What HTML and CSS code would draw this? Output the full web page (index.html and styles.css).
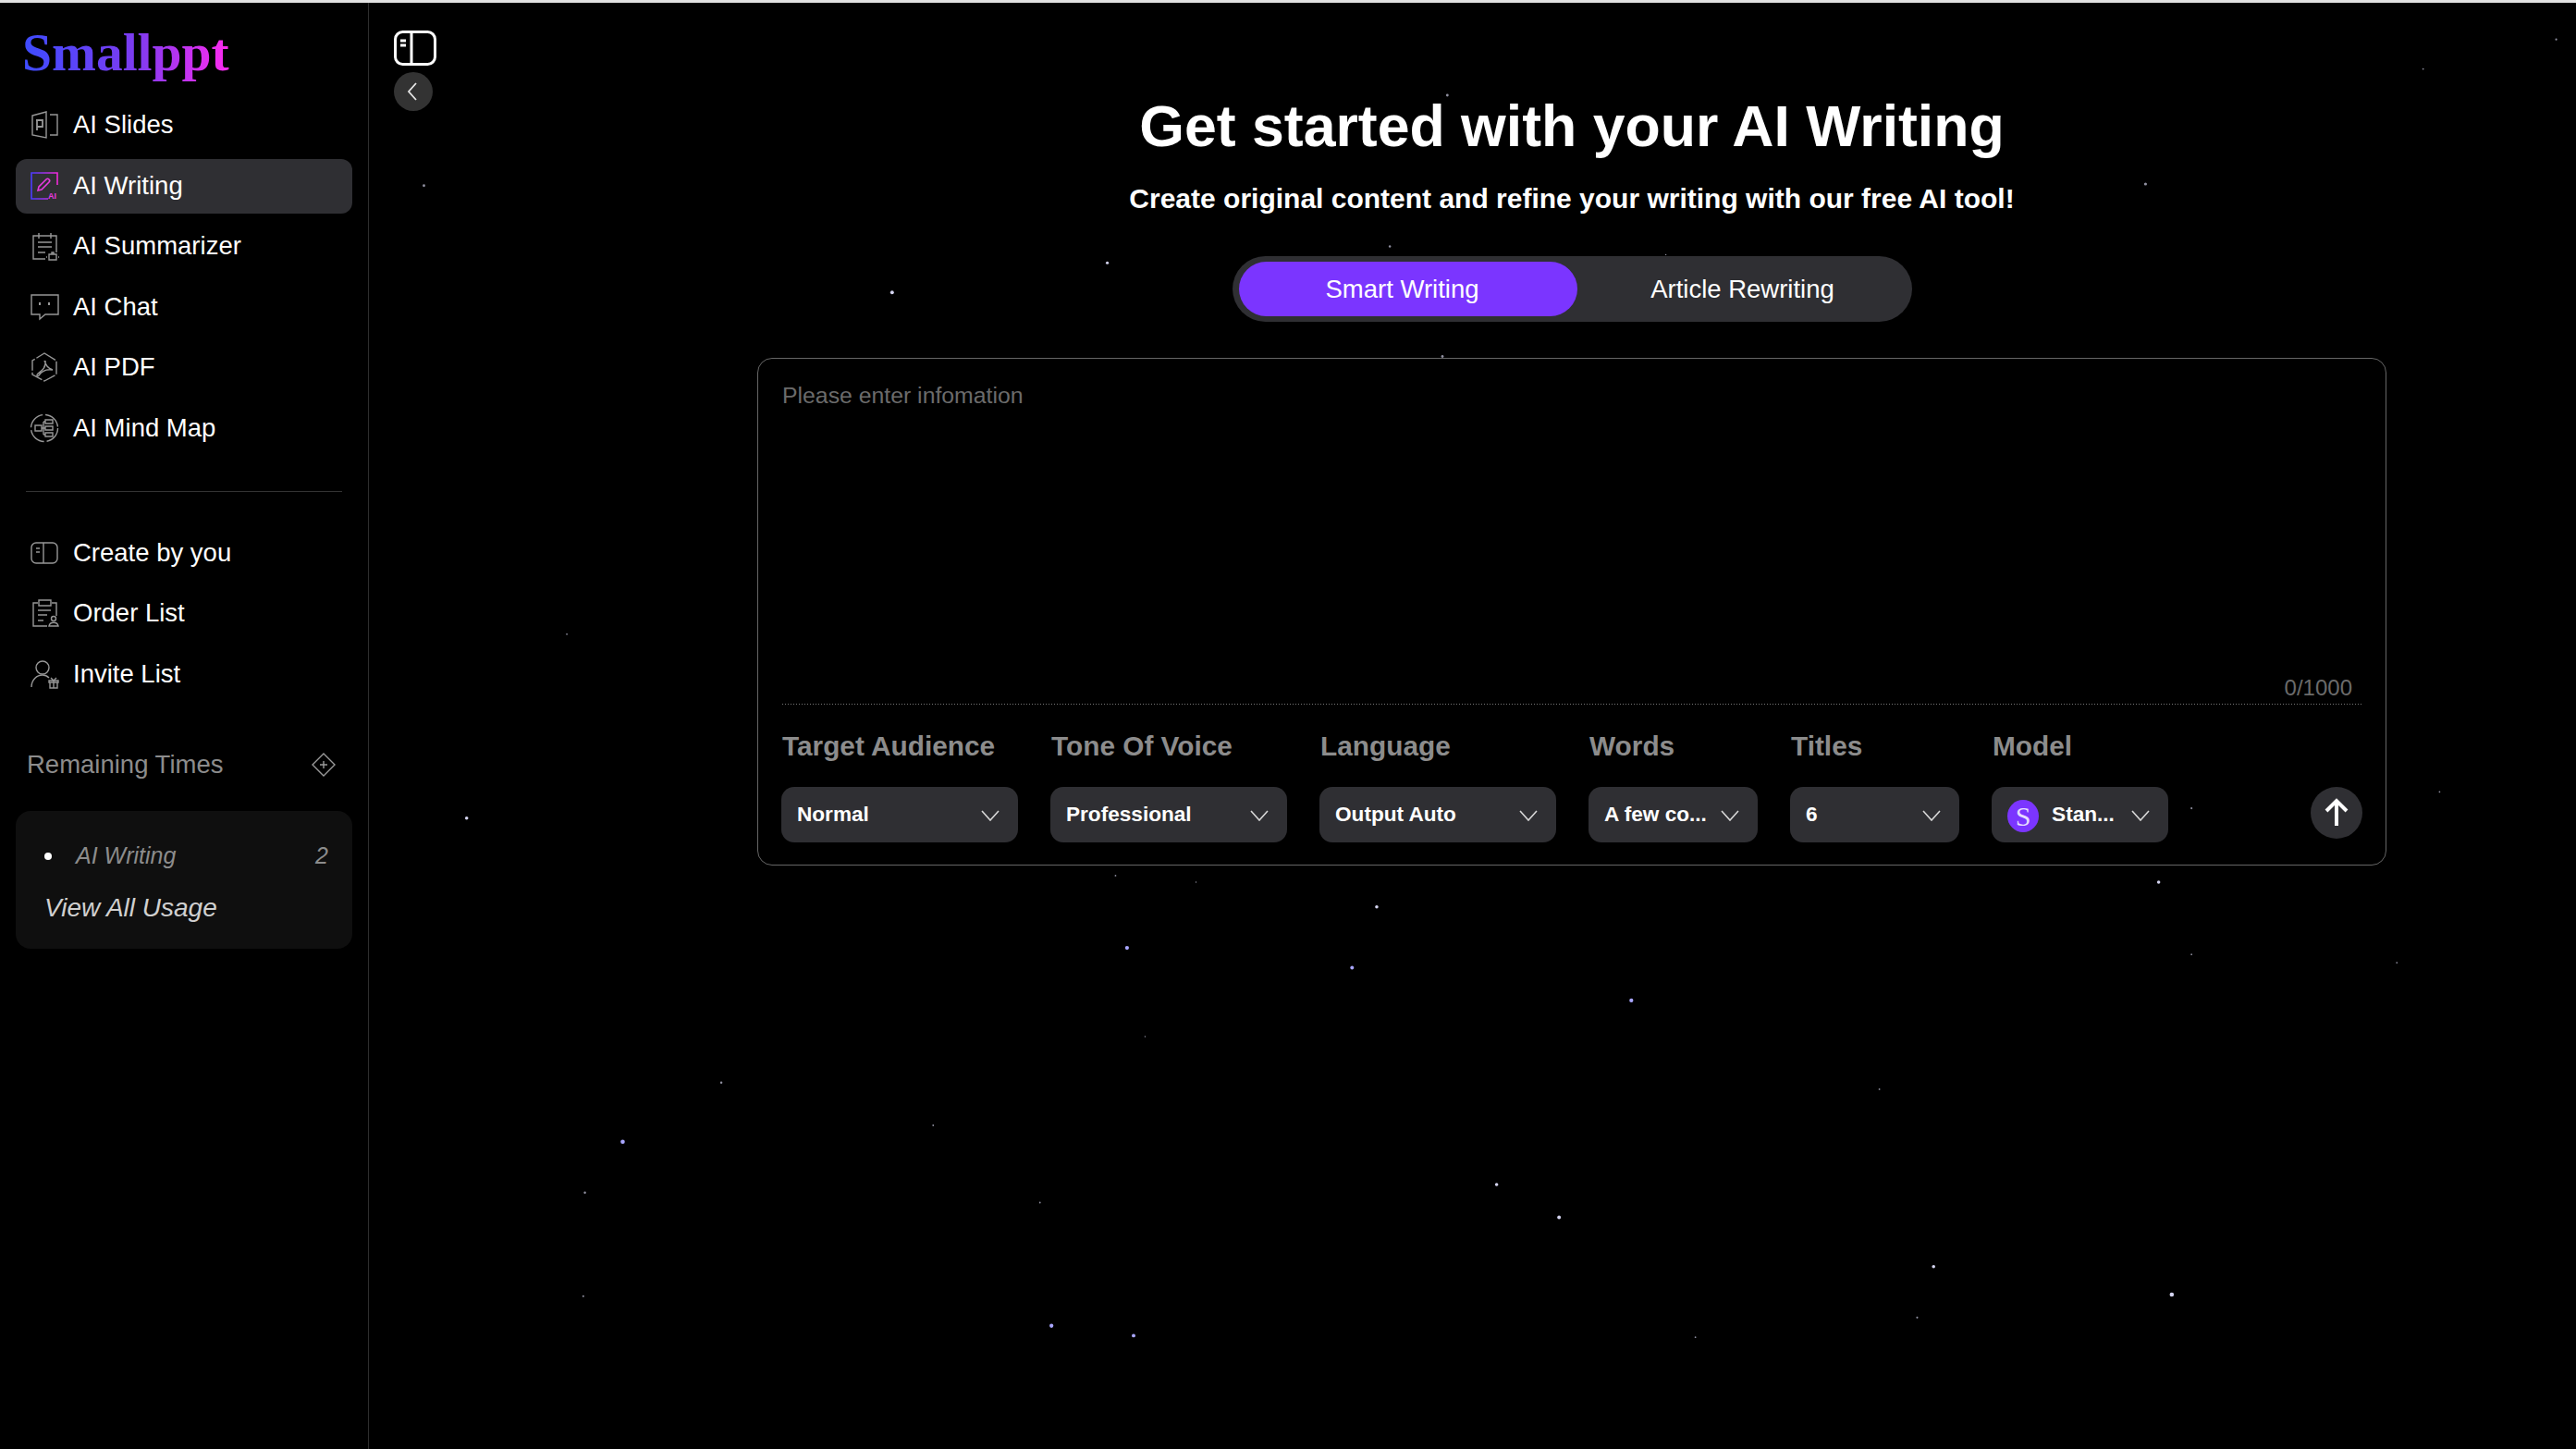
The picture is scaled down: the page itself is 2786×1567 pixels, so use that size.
FILE: index.html
```html
<!DOCTYPE html>
<html lang="en">
<head>
  <meta charset="UTF-8" />
  <meta name="viewport" content="width=device-width, initial-scale=1.0"/>
  <title>Smallppt – AI Writing</title>
  <link rel="stylesheet" href="styles.css">
</head>
<body>
  <!-- star field -->
  <svg class="stars" viewBox="0 0 1568 882" fill="#fff">
    <g fill="#8f8f9f">
      <circle cx="881" cy="58" r=".8"/><circle cx="1475" cy="42" r=".5"/><circle cx="1556" cy="24" r=".6"/>
      <circle cx="258" cy="113" r=".8"/><circle cx="1306" cy="112" r=".9"/><circle cx="846" cy="150" r=".7"/>
      <circle cx="1014" cy="155" r=".4"/><circle cx="878" cy="217" r=".8"/><circle cx="345" cy="386" r=".5"/>
      <circle cx="1485" cy="482" r=".5"/><circle cx="1334" cy="492" r=".6"/><circle cx="679" cy="533" r=".5"/>
      <circle cx="728" cy="537" r=".4"/><circle cx="1334" cy="581" r=".5"/><circle cx="1459" cy="586" r=".5"/>
      <circle cx="697" cy="631" r=".4"/><circle cx="439" cy="659" r=".7"/><circle cx="568" cy="685" r=".5"/>
      <circle cx="1144" cy="663" r=".5"/><circle cx="356" cy="726" r=".7"/><circle cx="633" cy="732" r=".5"/>
      <circle cx="355" cy="789" r=".6"/><circle cx="1167" cy="802" r=".6"/><circle cx="1032" cy="814" r=".5"/>
    </g>
    <g fill="#d4d4f0">
      <circle cx="674" cy="160" r=".9"/><circle cx="543" cy="178" r="1.1"/><circle cx="284" cy="498" r="1"/>
      <circle cx="1314" cy="537" r="1"/><circle cx="838" cy="552" r="1"/><circle cx="911" cy="721" r="1"/>
      <circle cx="949" cy="741" r="1.1"/><circle cx="1177" cy="771" r="1"/><circle cx="1322" cy="788" r="1.3"/>
    </g>
    <g fill="#a9a6ff">
      <circle cx="686" cy="577" r="1.2"/><circle cx="823" cy="589" r="1.1"/><circle cx="993" cy="609" r="1.2"/>
      <circle cx="379" cy="695" r="1.3"/><circle cx="640" cy="807" r="1.2"/><circle cx="690" cy="813" r="1.1"/>
    </g>
  </svg>

  <aside class="sidebar">
    <div class="logo">Smallppt</div>

    <nav class="nav">
      <a class="nav-item">
        <svg class="nav-icon" viewBox="0 0 32 32"><path d="M3 6l15-4v28L3 27zM22 5h8v22h-8"/><path d="M7 11h7v7H8M8 11v11" stroke-width="1.8"/></svg>
        AI Slides
      </a>
      <a class="nav-item active">
        <svg class="nav-icon" viewBox="0 0 32 32">
          <defs><linearGradient id="grad" x1="0" y1="0" x2="1" y2="0"><stop offset="0" stop-color="#4a3cff"/><stop offset="1" stop-color="#f22ad8"/></linearGradient></defs>
          <path d="M20 30H2V2h28v13" stroke="url(#grad)" stroke-width="1.6"/>
          <path d="M9 21l1-4 8-8c2-2 5 1 3 3l-8 8z" stroke="#e83ae0" stroke-width="1.6"/>
          <text x="20" y="30" class="icon-ai">AI</text>
        </svg>
        AI Writing
      </a>
      <a class="nav-item">
        <svg class="nav-icon" viewBox="0 0 32 32"><path d="M17 30H4V5h25v18M10 2v6M23 2v6M9 12h15M9 17h15M9 23h8"/><path d="M21 25h8v6h-8zM24 25v-2h2v2M18 28h1M31 28h1"/></svg>
        AI Summarizer
      </a>
      <a class="nav-item">
        <svg class="nav-icon" viewBox="0 0 32 32"><path d="M2 3h29v21H17l-6 5v-5H2z"/><path d="M11 11v3M21 11v3" stroke-width="2"/></svg>
        AI Chat
      </a>
      <a class="nav-item">
        <svg class="nav-icon" viewBox="0 0 32 32"><path d="M16 1l13 8v15l-13 7-13-7V9z" stroke-dasharray="14 2"/><path d="M16 9c2 5 3 8 9 10-6-1-11 0-15 6-2 2-3 0-1-2 4-3 9-6 8-14"/></svg>
        AI PDF
      </a>
      <a class="nav-item">
        <svg class="nav-icon" viewBox="0 0 32 32"><circle cx="16" cy="16" r="14.5" stroke-dasharray="20 3"/><path d="M6 13h7v6H6zM17 7h8v4h-8zM17 14h8v4h-8zM17 21h8v4h-8zM13 16h4M15 9v14M15 9h2M15 23h2"/></svg>
        AI Mind Map
      </a>
    </nav>

    <div class="divider"></div>

    <nav class="nav">
      <a class="nav-item">
        <svg class="nav-icon" viewBox="0 0 32 32"><rect x="2" y="5" width="28" height="22" rx="5"/><path d="M15 5v22M7 11h4M7 15h4"/></svg>
        Create by you
      </a>
      <a class="nav-item">
        <svg class="nav-icon" viewBox="0 0 32 32"><path d="M19 30H4V5h5M24 5h5v14M10 2h13v6H10zM9 13h14M9 18h10M9 24h6"/><circle cx="26" cy="22" r="2.5"/><path d="M21 30c1-5 9-5 10 0z"/></svg>
        Order List
      </a>
      <a class="nav-item">
        <svg class="nav-icon" viewBox="0 0 32 32"><circle cx="14" cy="9" r="7"/><path d="M2 30c0-8 6-13 12-13 3 0 5 1 7 3"/><path d="M21 23h10v2H21zM22 25h8v6h-8zM26 23v8M23 20l3 3 3-3"/></svg>
        Invite List
      </a>
    </nav>

    <div class="usage-head">
      <span>Remaining Times</span>
      <svg class="usage-add" viewBox="0 0 28 28"><path d="M14 2l12 12-12 12L2 14z"/><path d="M14 10v8M10 14h8"/></svg>
    </div>

    <div class="usage-card">
      <ul class="usage-list">
        <li><span>AI Writing</span><span>2</span></li>
      </ul>
      <a class="usage-link">View All Usage</a>
    </div>
  </aside>

  <main class="main">
    <div class="rail">
      <svg class="rail-toggle" viewBox="0 0 46 38"><rect x="1.5" y="1.5" width="43" height="35" rx="8"/><path d="M19 2v34M7 11h6M7 16h6"/></svg>
      <button class="rail-back">
        <svg viewBox="0 0 42 42"><path d="M24 12l-8 9 8 9"/></svg>
      </button>
    </div>

    <div class="content">
      <h1 class="title">Get started with your AI Writing</h1>
      <p class="subtitle">Create original content and refine your writing with our free AI tool!</p>

      <div class="tabs">
        <button class="tab active">Smart Writing</button>
        <button class="tab">Article Rewriting</button>
      </div>

      <div class="panel">
        <div class="input-area">
          <div class="placeholder">Please enter infomation</div>
          <div class="counter">0/1000</div>
        </div>

        <div class="options">
          <div class="option wide">
            <label>Target Audience</label>
            <div class="select"><span>Normal</span><svg class="chev" viewBox="0 0 20 12"><path d="M1 1l9 10 9-10"/></svg></div>
          </div>
          <div class="option wide">
            <label>Tone Of Voice</label>
            <div class="select"><span>Professional</span><svg class="chev" viewBox="0 0 20 12"><path d="M1 1l9 10 9-10"/></svg></div>
          </div>
          <div class="option wide">
            <label>Language</label>
            <div class="select"><span>Output Auto</span><svg class="chev" viewBox="0 0 20 12"><path d="M1 1l9 10 9-10"/></svg></div>
          </div>
          <div class="option narrow">
            <label>Words</label>
            <div class="select"><span>A few co...</span><svg class="chev" viewBox="0 0 20 12"><path d="M1 1l9 10 9-10"/></svg></div>
          </div>
          <div class="option narrow">
            <label>Titles</label>
            <div class="select"><span>6</span><svg class="chev" viewBox="0 0 20 12"><path d="M1 1l9 10 9-10"/></svg></div>
          </div>
          <div class="option model">
            <label>Model</label>
            <div class="select"><i class="model-badge">S</i><span>Stan...</span><svg class="chev" viewBox="0 0 20 12"><path d="M1 1l9 10 9-10"/></svg></div>
          </div>
          <button class="send">
            <svg viewBox="0 0 56 56"><path d="M28 42V15M17 26l11-11 11 11"/></svg>
          </button>
        </div>
      </div>
    </div>
  </main>
</body>
</html>
```

FILE: styles.css
```css
* {
  box-sizing: border-box;
}

html, body {
  height: 100%;
}

body {
  font-family: "Liberation Sans", Arial, sans-serif;
  background-color: #000;
  color: #fff;
  margin: 0;
  border-top: 3px solid #e2e2e2;
  display: flex;
  overflow: hidden;
}

.stars {
  position: absolute;
  left: 0;
  top: 0;
  width: 2786px;
  height: 1567px;
  pointer-events: none;
}

/* sidebar */
.sidebar {
  width: 399px;
  flex-shrink: 0;
  border-right: 1px solid #2e2e2e;
  padding: 0 17px;
}

.logo {
  height: 103px;
  padding: 21px 0 0 7px;
  font-family: "Liberation Serif", serif;
  font-weight: bold;
  font-size: 57.5px;
  line-height: 66px;
  background: linear-gradient(90deg, #3d4cff 7px, #7d3bf0 130px, #ff2bf0 232px);
  background-clip: text;
  -webkit-background-clip: text;
  color: transparent;
}

.nav {
  display: flex;
  flex-direction: column;
  gap: 6.5px;
}

.nav-item {
  display: flex;
  align-items: center;
  gap: 15px;
  height: 59px;
  padding: 0 0 1px 15px;
  border-radius: 12px;
  font-size: 27.5px;
  color: #fff;
}

.nav-item.active {
  background-color: #2f2f33;
}

.nav-icon {
  width: 32px;
  height: 32px;
  flex-shrink: 0;
  fill: none;
  stroke: #979797;
  stroke-width: 1.4;
}

.icon-ai {
  font-size: 9px;
  font-weight: bold;
  fill: #e83ae0;
  stroke: none;
}

.divider {
  height: 1px;
  background-color: #333;
  margin: 38px 11px 37px;
}

.usage-head {
  display: flex;
  justify-content: space-between;
  align-items: center;
  margin-top: 48px;
  padding: 0 17px 0 12px;
  height: 40px;
  font-size: 27.5px;
  color: #8c8c8c;
}

.usage-add {
  width: 28px;
  height: 28px;
  fill: none;
  stroke: #9a9a9a;
  stroke-width: 1.4;
}

.usage-card {
  margin-top: 30px;
  height: 149px;
  padding: 31px 26px 0 31px;
  background-color: #0f0f0f;
  border-radius: 16px;
}

.usage-list {
  list-style: none;
  margin: 0;
  padding: 0;
}

.usage-list li {
  display: flex;
  justify-content: space-between;
  align-items: center;
  position: relative;
  height: 36px;
  padding-left: 34px;
  font-size: 25px;
  font-style: italic;
  color: #8c8c8c;
}

.usage-list li::before {
  content: "";
  position: absolute;
  left: 0;
  top: 14px;
  width: 8px;
  height: 8px;
  border-radius: 50%;
  background-color: #fff;
}

.usage-link {
  display: block;
  margin-top: 20px;
  font-size: 28px;
  line-height: 36px;
  font-style: italic;
  color: #d0d0d0;
}

/* main */
.main {
  flex: 1;
  display: flex;
}

.rail {
  width: 215px;
  flex-shrink: 0;
  padding: 30px 0 0 27px;
}

.rail-toggle {
  display: block;
  width: 46px;
  height: 38px;
  fill: none;
  stroke: #fff;
  stroke-width: 3;
}

.rail-back {
  display: block;
  width: 42px;
  height: 42px;
  margin-top: 7px;
  padding: 0;
  border: none;
  border-radius: 50%;
  background-color: #333;
}

.rail-back svg {
  display: block;
  fill: none;
  stroke: #e6e6e6;
  stroke-width: 1.8;
}

.content {
  flex: 1;
  display: flex;
  flex-direction: column;
  align-items: center;
}

.title {
  margin: 96px 0 0;
  font-size: 62.6px;
  line-height: 74px;
  font-weight: bold;
}

.subtitle {
  margin: 22px 0 0;
  font-size: 30px;
  line-height: 40px;
  font-weight: bold;
}

.tabs {
  display: flex;
  margin-top: 42px;
  width: 735px;
  height: 71px;
  padding: 6px 4px 6px 7px;
  background-color: #2f2f33;
  border-radius: 36px;
}

.tab {
  width: 358px;
  border: none;
  background: none;
  color: #fff;
  font-family: inherit;
  font-size: 27.5px;
  border-radius: 30px;
}

.tab.active {
  width: 366px;
  padding-right: 18px;
  background-color: #7b35ff;
}

.panel {
  width: 1762px;
  height: 549px;
  margin-top: 39px;
  padding: 24px 26px 0 25px;
  border: 1px solid #666;
  border-radius: 16px;
}

.input-area {
  height: 350px;
  margin-left: 1px;
  background-image: linear-gradient(90deg, #777 50%, transparent 50%);
  background-size: 3px 1px;
  background-repeat: repeat-x;
  background-position: left bottom;
  position: relative;
}

.placeholder {
  font-size: 24.8px;
  line-height: 32px;
  color: #6b6b6b;
}

.counter {
  position: absolute;
  right: 10px;
  bottom: 2px;
  font-size: 24px;
  line-height: 32px;
  color: #6b6b6b;
}

.options {
  display: flex;
  gap: 35px;
  padding-top: 25px;
}

.option label {
  display: block;
  height: 40px;
  line-height: 40px;
  margin-bottom: 24px;
  padding-left: 1px;
  font-size: 29.8px;
  font-weight: bold;
  color: #8c8c8c;
}

.wide {
  width: 256px;
}

.narrow {
  width: 183px;
}

.model {
  width: 191px;
}

.select {
  display: flex;
  align-items: center;
  justify-content: space-between;
  height: 60px;
  padding: 0 20px 0 17px;
  background-color: #2f2f33;
  border-radius: 14px;
  font-size: 22.6px;
  font-weight: bold;
}

.narrow .select span {
  white-space: nowrap;
}

.chev {
  width: 20px;
  height: 12px;
  flex-shrink: 0;
  margin-top: 2px;
  fill: none;
  stroke: #d8d8d8;
  stroke-width: 1.6;
}

.model-badge {
  width: 34px;
  height: 35px;
  flex-shrink: 0;
  margin: 3px -4px 0 0;
  border-radius: 50%;
  background-color: #7b35ff;
  color: #e6dcff;
  font-family: "Liberation Serif", serif;
  font-style: normal;
  font-weight: normal;
  font-size: 30px;
  line-height: 35px;
  text-align: center;
}

.send {
  width: 56px;
  height: 56px;
  margin: 64px -1px 0 auto;
  padding: 0;
  border: none;
  border-radius: 50%;
  background-color: #2f2f33;
}

.send svg {
  display: block;
  fill: none;
  stroke: #fff;
  stroke-width: 4;
}
```
